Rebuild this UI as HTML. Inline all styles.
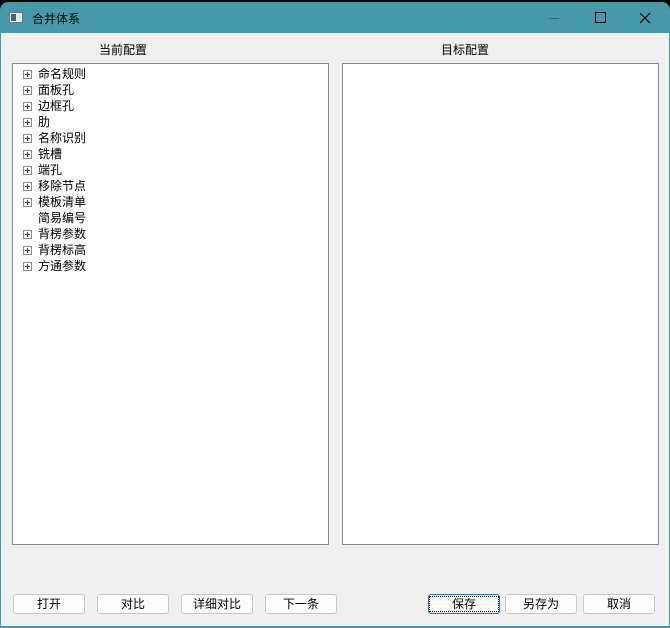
<!DOCTYPE html>
<html><head><meta charset="utf-8"><style>
*{margin:0;padding:0;box-sizing:border-box}
body{width:670px;height:628px;overflow:hidden;background:#000;font-family:"Liberation Sans","Noto Sans CJK SC",sans-serif;font-size:12px;color:#000;position:relative}
.win{position:absolute;left:0;top:2px;width:670px;height:626px;background:#4599a8;border-radius:8px 8px 0 0}
.title{position:absolute;left:0;top:0;width:670px;height:31px}
.title .t{position:absolute;left:32px;top:8px;font-size:12px}
.ico{position:absolute;left:9px;top:10px;width:14px;height:11px;background:#e8e8e8;border:1px solid #777}
.ico:before{content:"";position:absolute;left:1px;top:1px;width:5px;height:7px;background:#3a6b7a}
.client{position:absolute;left:1px;top:31px;width:668px;height:593px;background:#f0f0f0}
.lbl{position:absolute;top:41px;font-size:12px}
.panel{position:absolute;top:63px;width:317px;height:482px;background:#fff;border:1px solid #828790}
.item{position:absolute;left:25px;height:16px;line-height:16px;font-size:12px}
.pl{position:absolute;left:-15px;top:4px;width:9px;height:9px;border:1px solid #8a8a8a;background:#fff}
.pl:before{content:"";position:absolute;left:1px;top:3px;width:5px;height:1px;background:#334}
.pl:after{content:"";position:absolute;left:3px;top:1px;width:1px;height:5px;background:#334}
.btn{position:absolute;top:594px;width:72px;height:20px;border:1px solid #c8c8c8;border-radius:3px;background:#fdfdfd;text-align:center;line-height:18px;font-size:12px}
.btn.def{border:1px solid #2a6fc9}
.btn.def span{border:1px dotted #000;padding:0 22px}
</style></head><body>
<div class="win">
<div class="title"><div class="ico"></div><div class="t">合并体系</div>
<div style="position:absolute;left:549px;top:16px;width:10px;height:1px;background:#2f6e78"></div>
<div style="position:absolute;left:595px;top:10px;width:11px;height:11px;border:1px solid #000"></div>
<svg style="position:absolute;left:639px;top:10px" width="12" height="12"><path d="M1 1L11 11M11 1L1 11" stroke="#000" stroke-width="1.2"/></svg>
</div>
</div>
<div class="client" style="top:33px"></div>
<div class="lbl" style="left:99px">当前配置</div>
<div class="lbl" style="left:441px">目标配置</div>
<div class="panel" style="left:12px">
<div class="item" style="top:2px"><i class="pl"></i>命名规则</div>
<div class="item" style="top:18px"><i class="pl"></i>面板孔</div>
<div class="item" style="top:34px"><i class="pl"></i>边框孔</div>
<div class="item" style="top:50px"><i class="pl"></i>肋</div>
<div class="item" style="top:66px"><i class="pl"></i>名称识别</div>
<div class="item" style="top:82px"><i class="pl"></i>铣槽</div>
<div class="item" style="top:98px"><i class="pl"></i>端孔</div>
<div class="item" style="top:114px"><i class="pl"></i>移除节点</div>
<div class="item" style="top:130px"><i class="pl"></i>模板清单</div>
<div class="item" style="top:146px">简易编号</div>
<div class="item" style="top:162px"><i class="pl"></i>背楞参数</div>
<div class="item" style="top:178px"><i class="pl"></i>背楞标高</div>
<div class="item" style="top:194px"><i class="pl"></i>方通参数</div>
</div>
<div class="panel" style="left:342px"></div>
<div class="btn" style="left:13px">打开</div>
<div class="btn" style="left:97px">对比</div>
<div class="btn" style="left:181px">详细对比</div>
<div class="btn" style="left:265px">下一条</div>
<div class="btn def" style="left:428px"><span>保存</span></div>
<div class="btn" style="left:505px">另存为</div>
<div class="btn" style="left:583px">取消</div>
</body></html>
